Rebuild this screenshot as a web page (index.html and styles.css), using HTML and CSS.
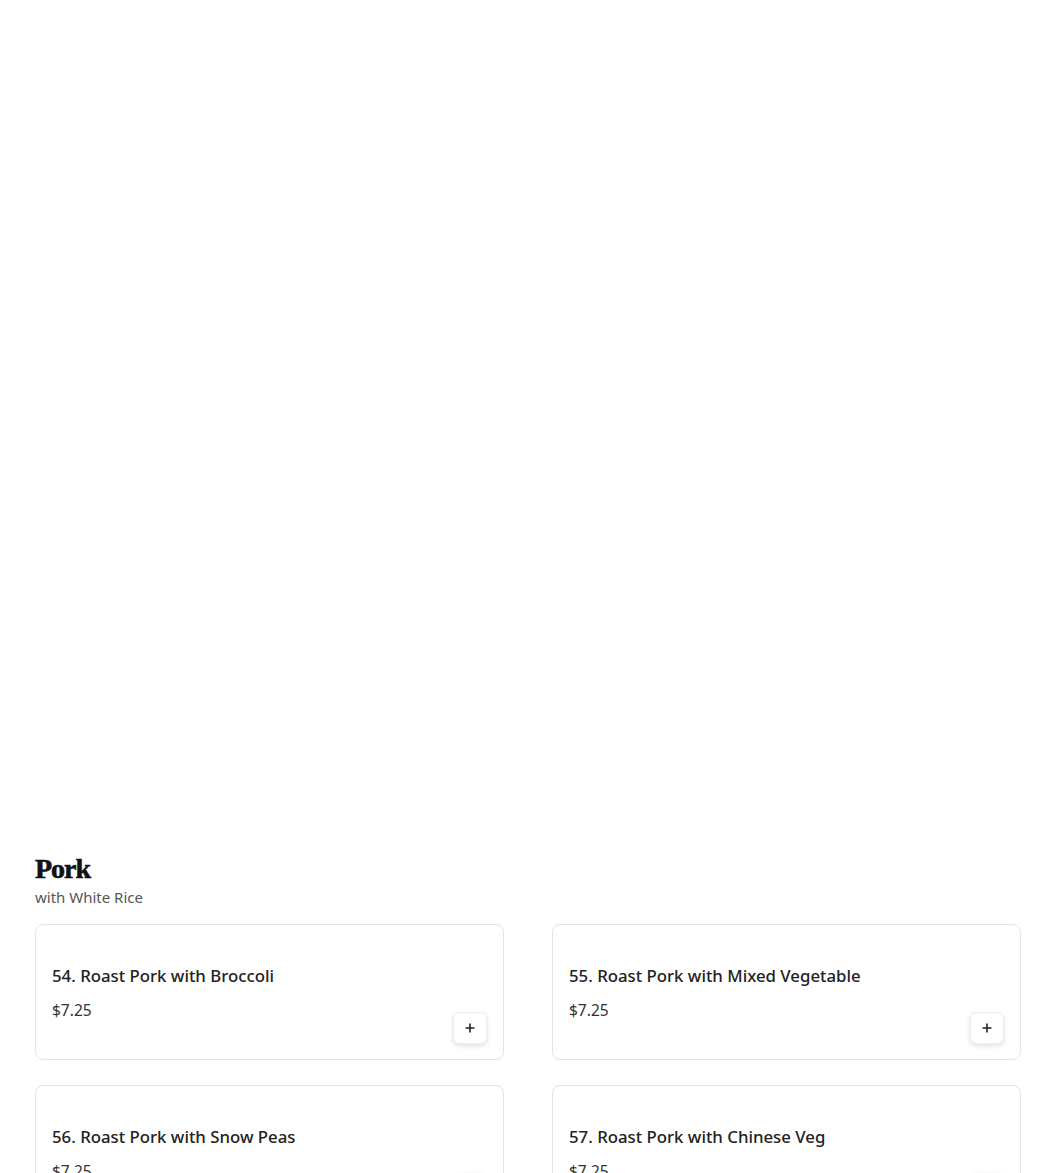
FILE: index.html
```html
<!DOCTYPE html>
<html>
<head>
<meta charset="utf-8">
<link rel="stylesheet" href="styles.css">
</head>
<body>
<main class="page">
  <div class="spacer"></div>
  <section class="category">
    <h2 class="cat-title">Pork</h2>
    <p class="cat-sub">with White Rice</p>
    <div class="grid">
      <div class="card">
        <h3 class="item-name">54. Roast Pork with Broccoli</h3>
        <div class="card-foot">
          <span class="price">$7.25</span>
          <button class="add" aria-label="Add"><svg width="12" height="12" viewBox="0 0 12 12"><path d="M6 1.5v9M1.5 6h9" stroke="#222" stroke-width="1.6" fill="none"/></svg></button>
        </div>
      </div>
      <div class="card">
        <h3 class="item-name">55. Roast Pork with Mixed Vegetable</h3>
        <div class="card-foot">
          <span class="price">$7.25</span>
          <button class="add" aria-label="Add"><svg width="12" height="12" viewBox="0 0 12 12"><path d="M6 1.5v9M1.5 6h9" stroke="#222" stroke-width="1.6" fill="none"/></svg></button>
        </div>
      </div>
      <div class="card">
        <h3 class="item-name">56. Roast Pork with Snow Peas</h3>
        <div class="card-foot">
          <span class="price">$7.25</span>
          <button class="add" aria-label="Add"><svg width="12" height="12" viewBox="0 0 12 12"><path d="M6 1.5v9M1.5 6h9" stroke="#222" stroke-width="1.6" fill="none"/></svg></button>
        </div>
      </div>
      <div class="card">
        <h3 class="item-name">57. Roast Pork with Chinese Veg</h3>
        <div class="card-foot">
          <span class="price">$7.25</span>
          <button class="add" aria-label="Add"><svg width="12" height="12" viewBox="0 0 12 12"><path d="M6 1.5v9M1.5 6h9" stroke="#222" stroke-width="1.6" fill="none"/></svg></button>
        </div>
      </div>
    </div>
  </section>
</main>
</body>
</html>
```
FILE: styles.css
```css
html, body {
  margin: 0;
  padding: 0;
  background: #fff;
}
body {
  font-family: "Noto Sans", "Open Sans", sans-serif;
  color: #222;
  overflow: hidden;
}
.page {
  padding: 0 29px 0 35px;
}
.spacer {
  height: 852px;
}
.cat-title {
  margin: 0;
  font-family: "Liberation Serif", "DejaVu Serif", serif;
  font-weight: 700;
  font-size: 28px;
  line-height: 34px;
  letter-spacing: -1px;
  color: #111;
  -webkit-text-stroke: 0.6px #111;
}
.cat-sub {
  margin: 1px 0 0;
  font-size: 15px;
  line-height: 20px;
  color: #555;
}
.grid {
  margin-top: 17px;
  display: grid;
  grid-template-columns: 1fr 1fr;
  column-gap: 48px;
  row-gap: 25px;
}
.card {
  border: 1px solid #e4e4e4;
  border-radius: 8px;
  padding: 39px 16px 15px;
  display: flex;
  flex-direction: column;
}
.item-name {
  margin: 0;
  font-size: 16.8px;
  font-weight: 500;
  line-height: 24px;
  color: #222;
}
.card-foot {
  margin-top: 11px;
  display: flex;
  justify-content: space-between;
  align-items: flex-start;
}
.price {
  font-size: 15.5px;
  line-height: 22px;
  color: #333;
}
.add {
  margin-top: 13px;
  width: 34px;
  height: 32px;
  border: 1px solid #ececec;
  border-radius: 6px;
  background: #fff;
  box-shadow: 0 2px 5px rgba(0,0,0,0.12);
  display: flex;
  align-items: center;
  justify-content: center;
  padding: 0;
}
```
